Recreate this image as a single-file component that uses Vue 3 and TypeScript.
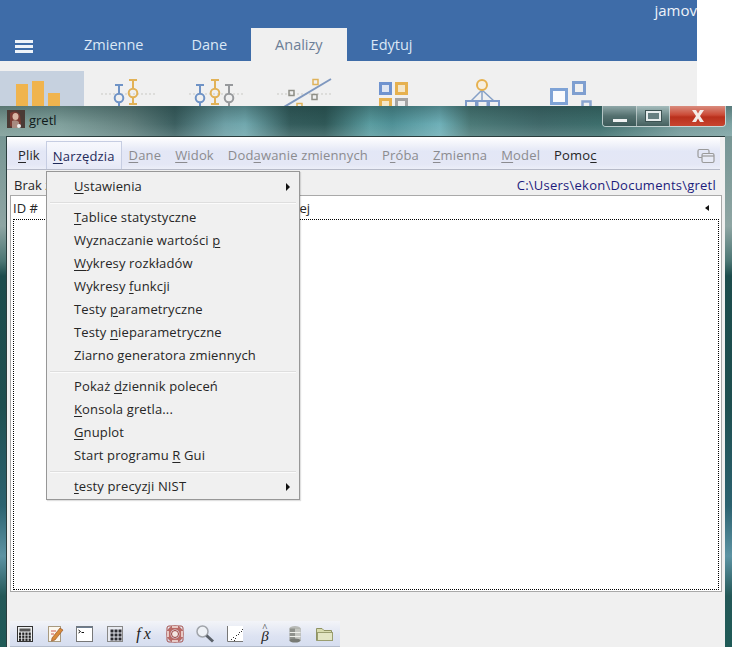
<script setup lang="ts">
interface Label { a: string; u: string; b: string }

function mn(text: string): Label {
  const i = text.indexOf('_')
  if (i < 0) return { a: text, u: '', b: '' }
  return { a: text.slice(0, i), u: text.charAt(i + 1), b: text.slice(i + 2) }
}

const tabs = [
  { name: 'Zmienne', active: false },
  { name: 'Dane', active: false },
  { name: 'Analizy', active: true },
  { name: 'Edytuj', active: false },
]

const menubar = [
  { l: mn('_Plik'), cls: 'first' },
  { l: mn('_Narzędzia'), cls: 'open' },
  { l: mn('_Dane'), cls: 'off' },
  { l: mn('_Widok'), cls: 'off' },
  { l: mn('Dod_awanie zmiennych'), cls: 'off' },
  { l: mn('P_róba'), cls: 'off' },
  { l: mn('_Zmienna'), cls: 'off' },
  { l: mn('_Model'), cls: 'off' },
  { l: mn('Pomo_c'), cls: '' },
]

const menuGroups = [
  [{ l: mn('_Ustawienia'), sub: true }],
  [
    { l: mn('_Tablice statystyczne'), sub: false },
    { l: mn('Wyznaczanie wartości _p'), sub: false },
    { l: mn('_Wykresy rozkładów'), sub: false },
    { l: mn('Wykresy _funkcji'), sub: false },
    { l: mn('Testy _parametryczne'), sub: false },
    { l: mn('Testy _nieparametryczne'), sub: false },
    { l: mn('Ziarno generatora zmiennych'), sub: false },
  ],
  [
    { l: mn('Pokaż _dziennik poleceń'), sub: false },
    { l: mn('_Konsola gretla...'), sub: false },
    { l: mn('_Gnuplot'), sub: false },
    { l: mn('Start programu _R Gui'), sub: false },
  ],
  [{ l: mn('_testy precyzji NIST'), sub: true }],
]

const calcKeys: number[][] = []
for (let r = 0; r < 3; r++) for (let c = 0; c < 4; c++) calcKeys.push([4 + c * 3.2, 9 + r * 3])
const gridCells: number[][] = []
for (let r = 0; r < 3; r++) for (let c = 0; c < 3; c++) gridCells.push([4.5 + c * 4, 4.5 + r * 4])
const scatter = [[5, 14], [7, 12], [9, 13], [10, 10], [12, 9], [13, 7], [15, 6], [16, 4], [8, 15]]
</script>

<template>
  <div class="root">
    <div class="jamovi">
      <header class="jhead">
        <div class="burger"><i></i><i></i><i></i></div>
        <nav class="tabs">
          <span v-for="t in tabs" :key="t.name" class="tab" :class="{ active: t.active }">{{ t.name }}</span>
        </nav>
        <span class="brand">jamov</span>
      </header>
      <div class="ribbon">
        <div class="rb first"><svg width="84" height="45" viewBox="0 0 84 45">
          <rect x="0" y="10" width="84" height="35" fill="#c6d1df" />
          <rect x="16" y="23" width="12" height="22" fill="#f0b44e" />
          <rect x="32" y="20" width="12" height="25" fill="#f0b44e" />
          <rect x="48" y="32" width="12" height="13" fill="#f0b44e" />
        </svg></div>
        <div class="rb"><svg width="88" height="45" viewBox="0 0 88 45">
          <line x1="17" y1="33" x2="72" y2="33" class="dots" />
          <g class="blue"><path d="M31 24h8M35 24v8" /><circle cx="35" cy="37" r="4.3" /><path d="M35 42v4" /></g>
          <g class="yel"><path d="M45 19h8M49 19v9M45 43h8M49 37v6" /><circle cx="49" cy="32" r="4.3" /></g>
        </svg></div>
        <div class="rb"><svg width="88" height="45" viewBox="0 0 88 45">
          <line x1="17" y1="33" x2="72" y2="33" class="dots" />
          <g class="blue"><path d="M24 24h8M28 24v8" /><circle cx="28" cy="37" r="4.3" /><path d="M28 42v4" /></g>
          <g class="yel"><path d="M39 19h8M43 19v9M39 43h8M43 37v6" /><circle cx="43" cy="32" r="4.3" /></g>
          <g class="gry"><path d="M53 24h8M57 24v8" /><circle cx="57" cy="37" r="4.3" /><path d="M57 42v4" /></g>
        </svg></div>
        <div class="rb"><svg width="89" height="45" viewBox="0 0 89 45">
          <line x1="17" y1="33" x2="73" y2="33" class="dots" />
          <path d="M24 46 L71 18" stroke="#7f98bf" stroke-width="2" fill="none" />
          <rect x="29" y="29.500" width="5" height="5" class="sq-g" />
          <rect x="53" y="18.500" width="5" height="5" class="sq-y" />
          <rect x="52" y="33.500" width="5" height="5" class="sq-g" />
          <rect x="37" y="42.500" width="5" height="5" class="sq-y" />
        </svg></div>
        <div class="rb"><svg width="89" height="45" viewBox="0 0 89 45">
          <rect x="31.500" y="22.500" width="10" height="10" fill="#dfe6f2" stroke="#6f93cf" stroke-width="3" />
          <rect x="47.500" y="22.500" width="10" height="10" fill="#f4e6c8" stroke="#e6b14f" stroke-width="3" />
          <rect x="31.500" y="38.500" width="10" height="10" fill="#f4e6c8" stroke="#e6b14f" stroke-width="3" />
          <rect x="47.500" y="38.500" width="10" height="10" fill="#eee" stroke="#a3a3a3" stroke-width="3" />
        </svg></div>
        <div class="rb"><svg width="89" height="45" viewBox="0 0 89 45">
          <path d="M44 29 L33 40 M44 29 V40 M44 29 L56 40" stroke="#86a0c6" stroke-width="1.500" fill="none" />
          <circle cx="44" cy="24" r="5" fill="#f7efe0" stroke="#e6b14f" stroke-width="2" />
          <rect x="28" y="40" width="10" height="10" fill="#f0f0f0" stroke="#7f9bc9" stroke-width="2" />
          <rect x="39.500" y="40" width="10" height="10" fill="#f0f0f0" stroke="#7f9bc9" stroke-width="2" />
          <rect x="51" y="40" width="10" height="10" fill="#f0f0f0" stroke="#7f9bc9" stroke-width="2" />
        </svg></div>
        <div class="rb"><svg width="89" height="45" viewBox="0 0 89 45">
          <rect x="24.500" y="28.500" width="15" height="14" fill="#fafbfd" stroke="#7fa3d6" stroke-width="3" />
          <rect x="46.500" y="21.500" width="11" height="11" fill="#f0f0f0" stroke="#7f9fd0" stroke-width="3" />
          <rect x="55.500" y="40.500" width="8" height="8" fill="#f0f0f0" stroke="#8aa5cf" stroke-width="2.500" />
        </svg></div>
      </div>
    </div>

    <section class="win">
      <div class="title">
        <span class="app-ico"><svg width="18" height="18" viewBox="0 0 18 18">
          <rect width="18" height="18" fill="#4a3a35" />
          <path d="M3 3 Q9 -1 13 5 L14 14 L8 18 L3 16 Z" fill="#7a3b33" />
          <ellipse cx="8.500" cy="6.500" rx="3" ry="3.500" fill="#d9b6a4" />
          <path d="M5 11 Q9 9 12 12 L12 18 H5 Z" fill="#a88a80" />
          <circle cx="12" cy="16" r="2" fill="#eee" />
        </svg></span>
        <span class="title-text">gretl</span>
        <div class="ctl">
          <span class="cb min"><i></i></span>
          <span class="cb max"><i></i></span>
          <span class="cb close"><svg width="16" height="14" viewBox="0 0 16 14"><path d="M2 1 H6 L8 4.500 L10 1 H14 L10 7 L14 13 H10 L8 9.500 L6 13 H2 L6 7 Z" fill="#f4ece8" /></svg></span>
        </div>
      </div>

      <div class="client">
        <div class="menubar">
          <span v-for="(m, i) in menubar" :key="i" class="mb" :class="m.cls">{{ m.l.a }}<u>{{ m.l.u }}</u>{{ m.l.b }}</span>
          <span class="mb-end"><svg width="18" height="16" viewBox="0 0 18 16" fill="none" stroke="#9a9a9a" stroke-width="1.200">
            <rect x="1" y="1.500" width="11" height="8" rx="1.500" />
            <rect x="5" y="5.500" width="12" height="9" rx="1.500" fill="#e8ebf6" />
            <line x1="5" y1="8" x2="17" y2="8" />
          </svg></span>
        </div>
        <div class="status">
          <span>Brak z</span>
          <span class="path">C:\Users\ekon\Documents\gretl</span>
        </div>
        <div class="list">
          <div class="list-head">
            <span>ID #</span>
            <span class="col-name">Nazwa zmiennej</span>
            <span class="arrow"></span>
          </div>
          <div class="list-body"></div>
        </div>
        <div class="foot">
          <div class="toolbar">
            <span class="tb"><svg width="18" height="18" viewBox="0 0 18 18">
              <rect x="1.500" y="1.500" width="15" height="15" fill="#eef0f2" stroke="#333" />
              <rect x="3.500" y="3.500" width="11" height="3" fill="#555" />
              <rect v-for="(k, i) in calcKeys" :key="i" :x="k[0] - 1" :y="k[1] - 1.500" width="2.200" height="2.400" fill="#222" />
            </svg></span>
            <span class="tb"><svg width="18" height="18" viewBox="0 0 18 18">
              <rect x="2.500" y="1.500" width="12" height="15" fill="#fbf7ee" stroke="#a89a80" />
              <path d="M6 13 L14 3 L17 5 L9 15 L5.500 16 Z" fill="#d98a3a" stroke="#8a4a20" stroke-width=".6" />
              <path d="M5 6h5M5 9h3" stroke="#d05a50" />
            </svg></span>
            <span class="tb"><svg width="18" height="18" viewBox="0 0 18 18">
              <rect x=".5" y="1.500" width="16" height="15" fill="#fff" stroke="#777" />
              <rect x=".5" y="1.500" width="16" height="1.500" fill="#6d7d90" />
              <path d="M2.500 5 L4.500 6.500 L2.500 8 M5.500 7.500 H8" stroke="#111" fill="none" />
            </svg></span>
            <span class="tb"><svg width="18" height="18" viewBox="0 0 18 18">
              <rect x="1.500" y="1.500" width="15" height="15" fill="#e8eaf0" stroke="#888" />
              <rect v-for="(c, i) in gridCells" :key="i" :x="c[0]" :y="c[1]" width="3" height="3" fill="#2a2a30" />
            </svg></span>
            <span class="tb math fx">fx</span>
            <span class="tb"><svg width="20" height="20" viewBox="0 0 20 20" fill="none">
              <circle cx="10" cy="10" r="6.500" stroke="#b96a66" stroke-width="4" />
              <rect x="2" y="2" width="16" height="16" rx="2" stroke="#a4504c" />
              <circle cx="10" cy="10" r="3.500" fill="#f3e6e2" stroke="#9a3f3c" />
              <path d="M3 7v6M17 7v6M7 3h6M7 17h6" stroke="#e7c9c5" stroke-width="2" />
            </svg></span>
            <span class="tb"><svg width="20" height="20" viewBox="0 0 20 20" fill="none">
              <circle cx="7.500" cy="7.500" r="5.500" fill="#eef1f6" stroke="#a0a4aa" stroke-width="1.500" />
              <path d="M11.500 11.500 L18 17.500" stroke="#5a6068" stroke-width="3" />
            </svg></span>
            <span class="tb"><svg width="18" height="18" viewBox="0 0 18 18">
              <rect x="1" y="1" width="16" height="16" fill="#fff" />
              <path d="M1.500 1 V16.500 H17" stroke="#777" fill="none" />
              <rect v-for="(s, i) in scatter" :key="i" :x="s[0]" :y="s[1]" width="1" height="1" fill="#333" />
            </svg></span>
            <span class="tb math"><span class="beta">β</span></span>
            <span class="tb"><svg width="14" height="18" viewBox="0 0 14 18">
              <ellipse cx="7" cy="3.500" rx="5.500" ry="2.500" fill="#b8bab6" />
              <rect x="1.500" y="3.500" width="11" height="12" fill="#8f928c" />
              <rect x="7" y="3.500" width="5.500" height="12" fill="#c4c6c0" />
              <ellipse cx="7" cy="15.500" rx="5.500" ry="2" fill="#777a74" />
              <path d="M1.500 7.500 H12.500 M1.500 11.500 H12.500" stroke="#eef0ea" />
            </svg></span>
            <span class="tb"><svg width="20" height="18" viewBox="0 0 20 18">
              <path d="M1.500 3.500 H7 L9 5.500 H16.500 V15.500 H1.500 Z" fill="#d8dcae" stroke="#8f9364" />
              <rect x="2.500" y="7.500" width="15" height="8" fill="#e3e6c4" stroke="#9a9e70" />
            </svg></span>
          </div>
        </div>
      </div>
    </section>

    <div class="menu">
      <template v-for="(g, gi) in menuGroups" :key="gi">
        <div v-if="gi > 0" class="sep"></div>
        <div v-for="(it, i) in g" :key="i" class="mi">
          <span>{{ it.l.a }}<u>{{ it.l.u }}</u>{{ it.l.b }}</span>
          <span v-if="it.sub" class="caret"></span>
        </div>
      </template>
    </div>
  </div>
</template>

<style>
html, body { margin: 0; background: #fff; }
</style>

<style scoped>
.root {
  position: relative;
  width: 732px;
  height: 657px;
  overflow: hidden;
  background: #fff;
  font-family: "Open Sans", "Noto Sans", sans-serif;
  font-size: 13px;
  color: #262626;
}
u { text-underline-offset: 2px; text-decoration-thickness: 1px; }

.jamovi { width: 697px; }
.jhead {
  position: relative;
  height: 61px;
  background: #3e6ca8;
  display: flex;
  align-items: flex-end;
  overflow: hidden;
}
.burger {
  width: 18px;
  margin: 0 27px 8px 15px;
  display: flex;
  flex-direction: column;
  gap: 2px;
}
.burger i { display: block; height: 3px; background: #eef3f9; }
.tabs { display: flex; }
.tab {
  height: 33px;
  line-height: 33px;
  padding: 0 24px;
  color: #dbe8f6;
  font-size: 14.5px;
}
.tab.active { background: #f0f0f0; color: #6c7e96; }
.brand {
  position: absolute;
  right: 0;
  top: 1px;
  color: #eef3f9;
  font-size: 15px;
  line-height: 18px;
  white-space: nowrap;
}
.ribbon {
  height: 45px;
  background: #f0f0f0;
  display: flex;
  overflow: hidden;
}
.rb { flex: none; }
.rb svg { display: block; }
.dots { stroke: #c9c9c4; stroke-width: 1; stroke-dasharray: 2 2; }
.blue, .yel, .gry { fill: none; stroke-width: 2; }
.blue { stroke: #6f93c6; }
.yel { stroke: #e2b257; }
.gry { stroke: #97999c; }
.sq-g { fill: none; stroke: #8e8e86; stroke-width: 1.5; }
.sq-y { fill: none; stroke: #dfb25a; stroke-width: 1.5; }

.win {
  position: absolute;
  left: 0;
  top: 106px;
  width: 732px;
  height: 541px;
  background: linear-gradient(180deg,
    #6f918f 0, #8ea5a3 120px, #4c7674 155px, #1d4c4c 170px, #1e4f50 300px,
    #2c6270 400px, #5d93a3 450px, #245858 490px, #1f5a56 541px);
}
.title {
  height: 30px;
  display: flex;
  align-items: flex-start;
  background:
    linear-gradient(180deg, rgba(20,50,50,.35) 0, rgba(20,50,50,0) 60%, rgba(190,215,215,.2) 100%),
    linear-gradient(90deg,
      #7f9c96 0, #80a09c 60px, #63817f 130px, #3c5f60 175px, #6ea0a6 225px, #71a8ae 245px,
      #345c5c 290px, #2f5857 325px, #5a9ca0 370px, #4f9096 392px, #6fb0b8 440px, #4c7a78 470px,
      #40696a 540px, #3d6e6c 600px, #759a9a 680px, #7ea3a3 732px);
}
.app-ico { margin: 4px 0 0 7px; width: 18px; height: 18px; }
.app-ico svg { display: block; }
.title-text { margin: 3px 0 0 4px; font-size: 13px; line-height: 22px; color: #101a1a; }
.ctl {
  margin-left: auto;
  margin-right: 6px;
  display: flex;
  height: 20px;
  border: 1px solid rgba(235,240,240,.7);
  border-top: 0;
  border-radius: 0 0 4px 4px;
  overflow: hidden;
}
.cb {
  display: flex;
  align-items: center;
  justify-content: center;
  border-right: 1px solid rgba(235,240,240,.6);
}
.cb:last-child { border-right: 0; }
.min { width: 33px; background: linear-gradient(180deg, #8fa7a8 0, #54706f 50%, #3c5a59 100%); }
.min i { width: 14px; height: 3px; margin-top: 9px; background: #eef2f2; }
.max { width: 32px; background: linear-gradient(180deg, #a5bcbc 0, #6b8786 50%, #46605f 100%); }
.max i { width: 11px; height: 6px; border: 2px solid #e6ecec; background: #667f80; outline: 1px solid #3c5252; }
.close { width: 55px; background: linear-gradient(180deg, #d98c7e 0, #cb4a36 45%, #b9301c 55%, #c8452f 100%); }

.client {
  margin: 0 7px 0 6px;
  height: 511px;
  box-sizing: border-box;
  background: #f0f0f0;
  box-shadow: inset 1px 1px 0 #2a3d3d;
  padding: 1px 0 0 1px;
  display: flex;
  flex-direction: column;
}
.menubar {
  height: 33px;
  flex: none;
  box-sizing: border-box;
  display: flex;
  align-items: flex-end;
  margin-right: 5px;
  border-bottom: 1px solid #b6bac8;
  background: linear-gradient(180deg, #fff 0, #f4f5fb 18%, #e3e7f6 45%, #e4e7f5 85%, #eceef8 100%);
}
.mb {
  height: 28px;
  line-height: 29px;
  padding: 0 7px;
  white-space: nowrap;
  box-sizing: border-box;
  letter-spacing: .16px;
}
.mb.first { margin-left: 4px; }
.mb.open {
  margin-left: -1px;
  background: linear-gradient(180deg, #f7f8fd, #e6e9f6);
  border: 1px solid #c6cde2;
  border-bottom: 0;
  padding: 0 6px;
  color: #1f2a5a;
}
.mb.off { color: #8b8b8f; }
.mb-end { margin: 0 0 5px auto; padding-right: 5px; height: 16px; }
.mb-end svg { display: block; }
.status {
  height: 25px;
  flex: none;
  display: flex;
  justify-content: space-between;
  align-items: center;
  padding: 4px 9px 0 7px;
  box-sizing: border-box;
}
.path { color: #1c1c7c; letter-spacing: .24px; }
.list {
  flex: none;
  margin: 0 3px 0 3px;
  height: 397px;
  box-sizing: border-box;
  border: 1px solid #a9a9a9;
  background: #fff;
  display: flex;
  flex-direction: column;
}
.list-head {
  height: 23px;
  flex: none;
  display: grid;
  grid-template-columns: 59px 238px 1fr 16px;
  align-items: center;
  padding-left: 2px;
  box-sizing: border-box;
}
.col-name { text-align: right; white-space: nowrap; }
.arrow {
  grid-column: 4;
  justify-self: start;
  width: 0;
  height: 0;
  border-style: solid;
  border-width: 3.5px 4px 3.5px 0;
  border-color: transparent #111 transparent transparent;
}
.list-body {
  flex: 1;
  margin: 0 2px 1px 2px;
  border: 1px dotted #000;
}
.foot {
  flex: 1;
  display: flex;
  align-items: flex-end;
  padding-left: 3px;
}
.toolbar {
  width: 330px;
  height: 26px;
  display: flex;
  box-sizing: border-box;
  padding-top: 1px;
  border-bottom: 1px solid #b4bccc;
  background: linear-gradient(180deg, #f3f4f8 0, #dde3f2 60%, #d6deef 100%);
}
.tb {
  width: 30px;
  flex: none;
  display: flex;
  align-items: center;
  justify-content: center;
}
.tb svg { display: block; }
.math {
  font-family: "Liberation Serif", serif;
  font-style: italic;
  font-size: 16px;
  color: #222;
}
.fx { letter-spacing: 3px; }
.beta { position: relative; font-size: 15px; line-height: 16px; margin-top: 3px; }
.beta::after {
  content: "^";
  position: absolute;
  left: 1px;
  top: -6px;
  font-size: 10px;
  line-height: 12px;
}

.menu {
  position: absolute;
  left: 46px;
  top: 171px;
  width: 254px;
  height: 329px;
  box-sizing: border-box;
  padding-top: 3px;
  background: #f0f0f0;
  border: 1px solid #979797;
  box-shadow: 1px 1px 1px rgba(0,0,0,.12);
  letter-spacing: .13px;
}
.mi {
  height: 23px;
  line-height: 23px;
  padding-left: 27px;
  padding-right: 9px;
  display: flex;
  justify-content: space-between;
  align-items: center;
  white-space: nowrap;
}
.sep { height: 8px; box-sizing: border-box; padding-top: 4px; }
.sep::after { content: ""; display: block; height: 1px; margin: 0 3px; background: #dedede; box-shadow: 0 1px 0 #fbfbfb; }
.caret {
  width: 0;
  height: 0;
  border-style: solid;
  border-width: 4px 0 4px 4px;
  border-color: transparent transparent transparent #111;
}
</style>
